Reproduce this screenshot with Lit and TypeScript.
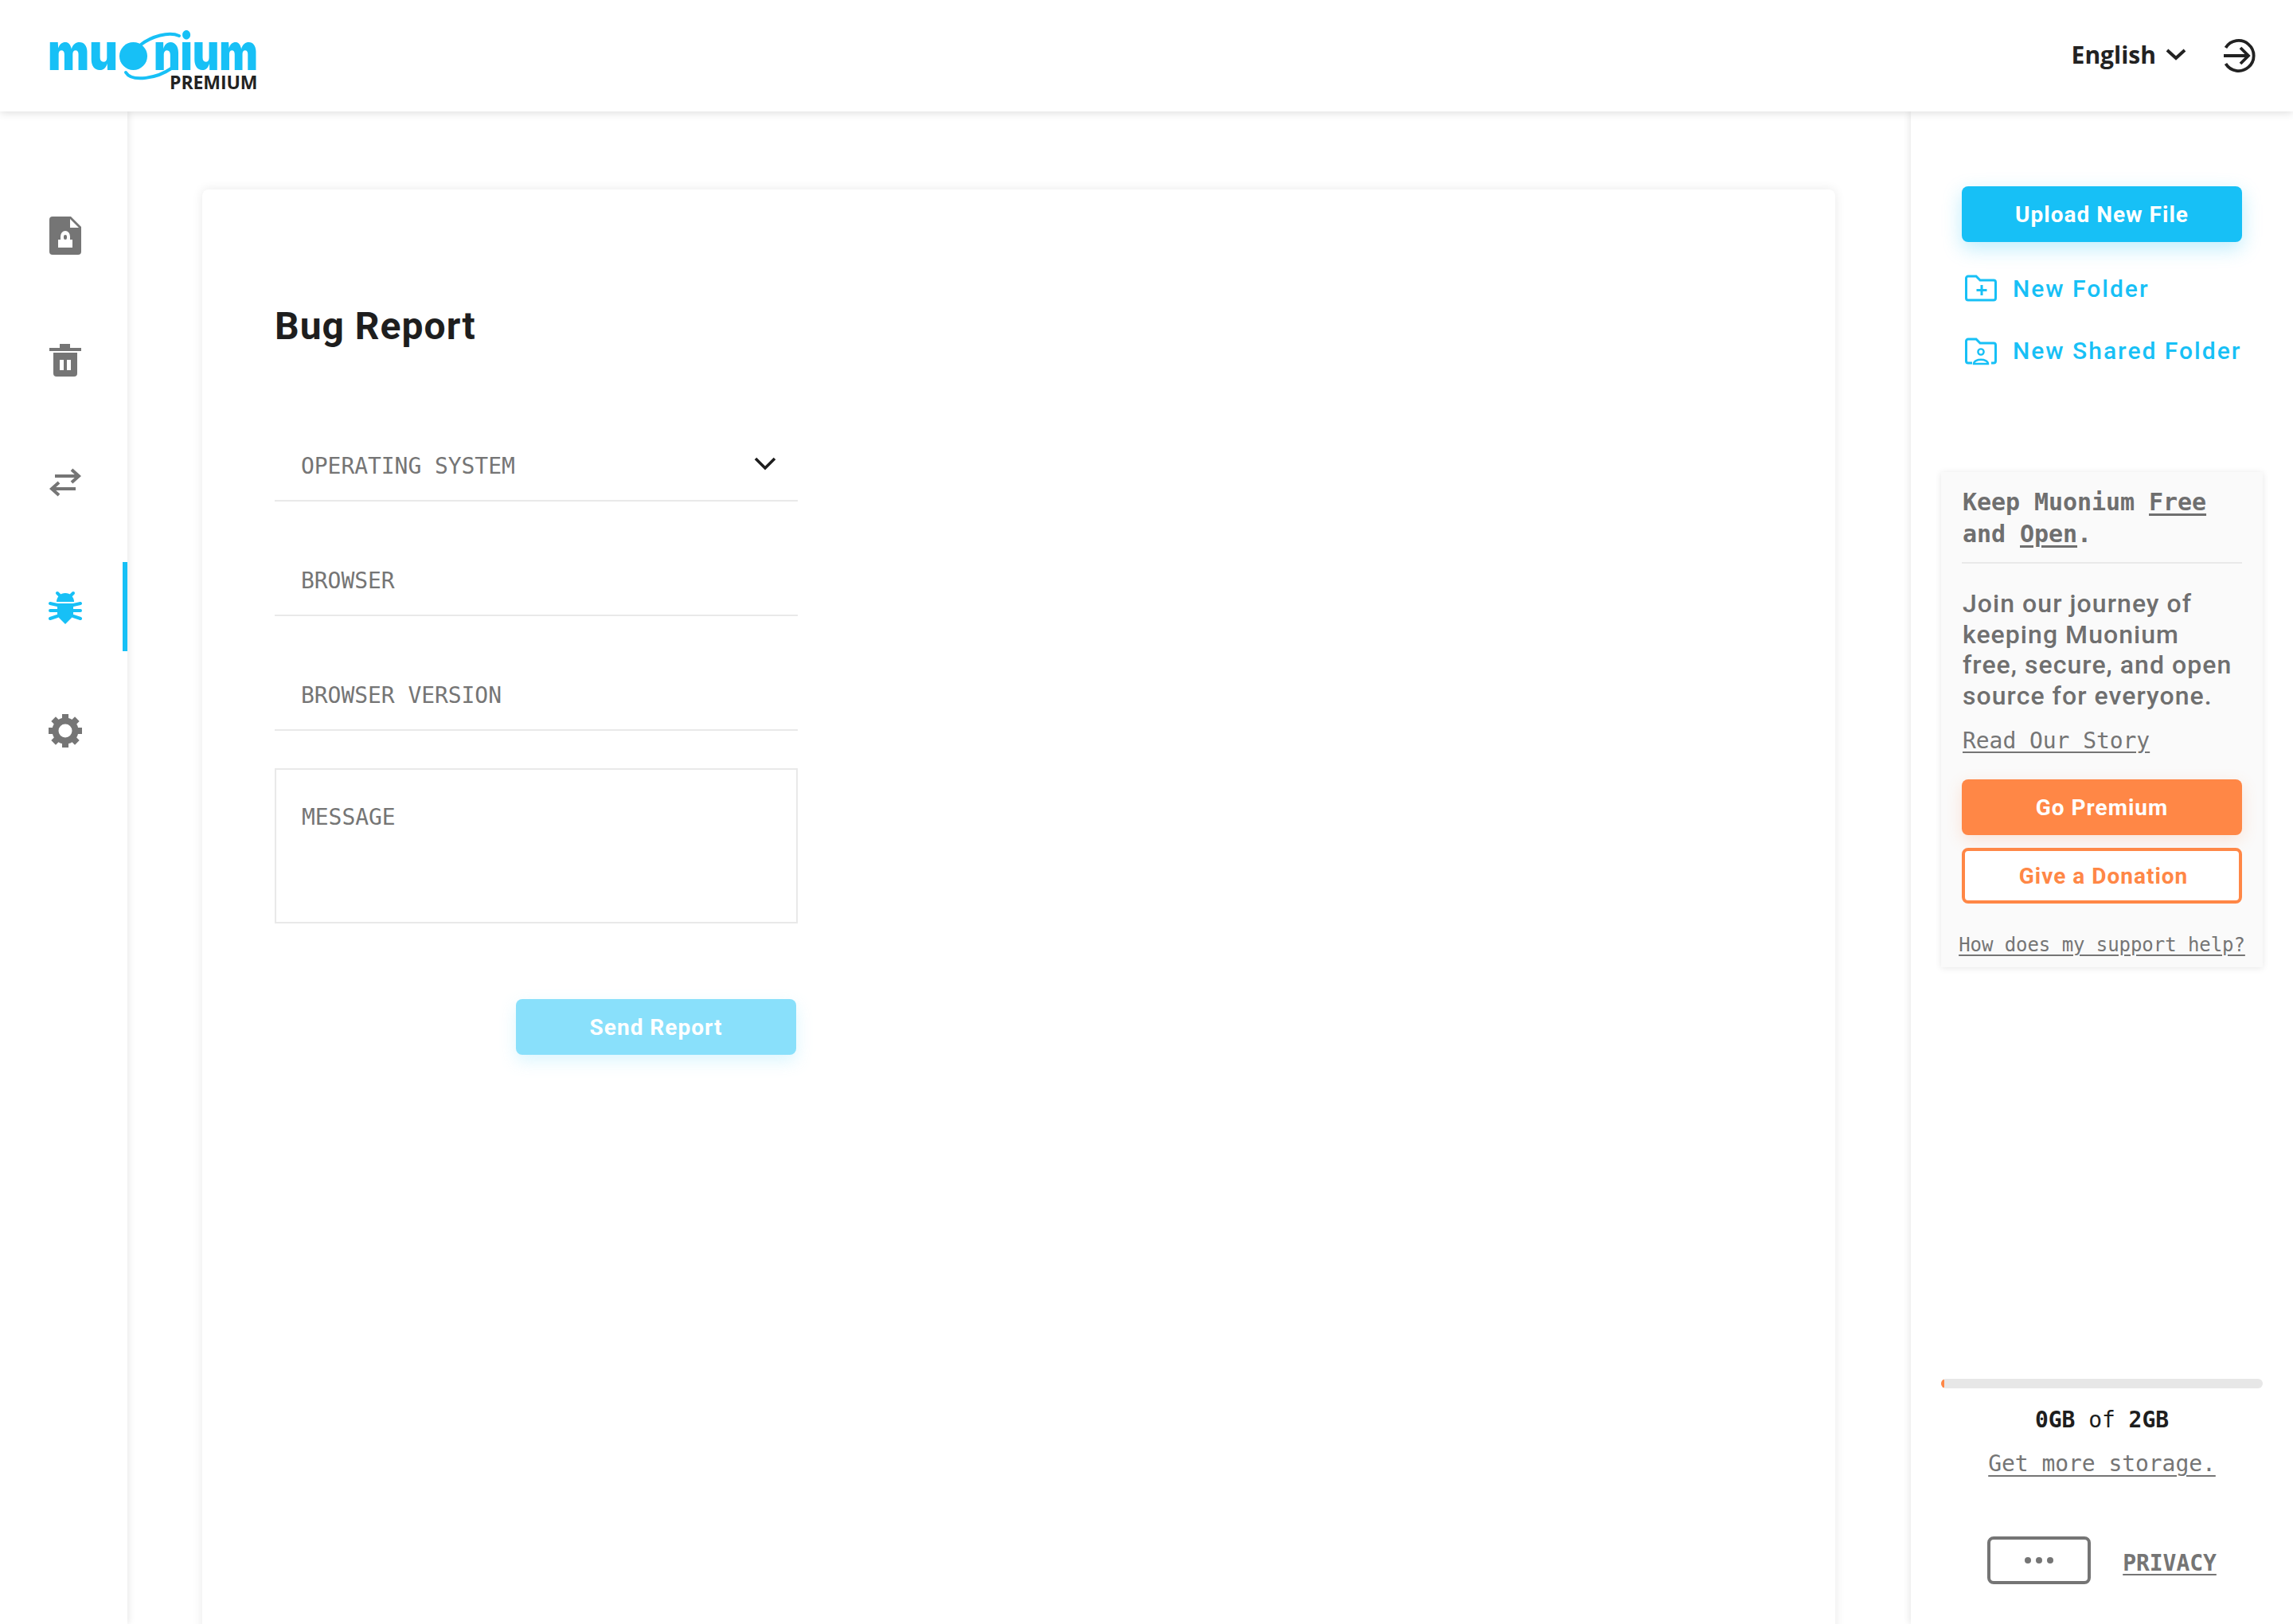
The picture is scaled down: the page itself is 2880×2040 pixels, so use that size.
import { LitElement, html, css, svg } from "lit";
import { customElement } from "lit/decorators.js";

const gearTeeth = [0, 45, 90, 135, 180, 225, 270, 315];

@customElement("app-root")
export class AppRoot extends LitElement {
  static styles = css`
    :host { display: block; width: 2880px; height: 2040px; overflow: hidden; background: #fff; color: #757575; font-family: "DejaVu Sans Mono", monospace; letter-spacing: -.06px; }
    * { box-sizing: border-box; }
    svg { display: block; flex: none; overflow: visible; }
    .header { height: 140px; background: #fff; display: flex; align-items: center; padding: 0 46px 0 48px; box-shadow: 0 2px 10px rgba(0,0,0,.13); position: relative; z-index: 3; }
    .logo-word { font-family: Inter, sans-serif; font-weight: 900; font-size: 64px; fill: #17c0f6; }
    .logo-sub { font-family: "Open Sans", sans-serif; font-weight: 700; font-size: 23px; fill: #222; }
    .spacer { flex: 1; }
    .lang { font-family: "Open Sans", sans-serif; font-weight: 700; font-size: 30px; letter-spacing: 0; color: #222; display: flex; align-items: center; gap: 12px; margin-right: 46px; margin-top: -4px; margin-left: -2px; }
    .body { display: flex; height: 1900px; }
    .nav { width: 160px; flex: none; box-shadow: 2px 0 8px rgba(0,0,0,.09); position: relative; z-index: 2; background: #fff; display: flex; flex-direction: column; align-items: center; padding: 132px 0 0 4px; }
    .nav-item { display: flex; justify-content: center; align-items: center; width: 100%; height: 48px; }
    .nav-item.trash { margin-top: 108px; }
    .nav-item.swap { margin-top: 106px; }
    .nav-item.bug { margin-top: 109px; }
    .nav-item.gear { margin-top: 107px; }
    .active-bar { position: absolute; right: 0; top: 566px; width: 6px; height: 112px; background: #17c0f6; }
    .main { flex: 1; min-width: 0; padding: 98px 95px 0 94px; }
    .card { height: 2000px; background: #fff; border-radius: 8px; box-shadow: 0 0 14px rgba(0,0,0,.09); padding: 140px 0 0 91px; }
    h1 { margin: 0; font: 700 48px/64px Roboto, sans-serif; color: #1e1e1e; letter-spacing: 1px; }
    .form { width: 657px; margin-top: 108px; }
    .field { height: 80px; border-bottom: 2px solid #e9e9e9; font-size: 28px; line-height: 32px; padding: 20px 0 0 33px; display: flex; justify-content: space-between; margin-bottom: 64px; }
    .field svg { margin: 4px 27px 0 0; }
    .msg { height: 195px; border: 2px solid #e9e9e9; font-size: 28px; line-height: 32px; padding: 44px 0 0 32px; margin-top: -17px; }
    .send-row { display: flex; justify-content: flex-end; margin-top: 95px; }
    .btn { height: 70px; border-radius: 8px; display: flex; align-items: center; justify-content: center; font: 700 28px/32px Roboto, sans-serif; letter-spacing: 1px; color: #fff; padding-top: 2px; }
    .send { width: 352px; margin-right: 2px; background: #89e0fb; box-shadow: 0 8px 20px rgba(137,224,251,.3); }
    .side { width: 480px; flex: none; box-shadow: -2px 0 8px rgba(0,0,0,.09); position: relative; z-index: 2; background: #fff; padding: 94px 38px 0 38px; display: flex; flex-direction: column; }
    .upload { width: 352px; margin-left: 26px; background: #17c0f6; box-shadow: 0 8px 24px rgba(23,192,246,.28); }
    .link { display: flex; align-items: center; height: 34px; margin: 41px 0 0 30px; gap: 20px; color: #17c0f6; font: 500 30px/34px Roboto, sans-serif; letter-spacing: 2px; white-space: nowrap; }
    .link + .link { margin-top: 45px; }
    .link span { margin-top: 2px; }
    .link + .link span { margin-top: 0; }
    .promo { margin-top: 135px; width: 404px; height: 622px; background: #fafafa; box-shadow: 0 1px 8px rgba(0,0,0,.1); padding: 18px 26px 0 26px; }
    .promo-title { font-weight: 700; font-size: 30px; line-height: 40px; padding: 0 0 15px 1px; border-bottom: 2px solid #e9e9e9; color: #6f6f6f; }
    .promo-title u { text-underline-offset: 4px; }
    .promo-text { font: 500 32px/38.5px Roboto, sans-serif; letter-spacing: 1.05px; margin: 31px 0 0 1px; color: #6f6f6f; width: 345px; }
    .story { font-size: 28px; line-height: 40px; margin: 18px 0 0 1px; text-decoration: underline; text-underline-offset: 4px; }
    .premium { margin-top: 28px; background: #ff8746; box-shadow: 0 6px 20px rgba(255,135,70,.2); }
    .donate { margin-top: 16px; background: #fff; border: 4px solid #ff8746; color: #ff8746; padding-left: 4px; }
    .help { font-size: 24px; line-height: 32px; margin: 36px -6px 0; text-align: center; text-decoration: underline; text-underline-offset: 4px; white-space: nowrap; }
    .storage { margin-top: 517px; width: 404px; display: flex; flex-direction: column; align-items: center; }
    .bar { align-self: stretch; height: 12px; border-radius: 6px; background: #e7e7e7; overflow: hidden; }
    .bar i { display: block; height: 100%; width: 4px; background: #ff8746; border-radius: 2px; }
    .usage { font-size: 28px; line-height: 40px; margin-top: 20px; color: #1e1e1e; white-space: pre; }
    .more { font-size: 28px; line-height: 40px; margin-top: 15px; text-decoration: underline; text-underline-offset: 5px; }
    .foot { display: flex; align-items: center; gap: 40px; margin-top: 71px; }
    .dots { width: 130px; height: 60px; border: 4px solid #757575; border-radius: 8px; display: flex; align-items: center; justify-content: center; gap: 6px; }
    .dots i { width: 8px; height: 8px; border-radius: 50%; background: #757575; }
    .privacy { font-weight: 700; font-size: 28px; text-decoration: underline; text-underline-offset: 4px; margin-top: 6px; }
  `;

  render() {
    return html`
      <div class="header">
        <svg width="300" height="100" viewBox="48 20 300 100">
          <text class="logo-word" x="60" y="88" textLength="88" lengthAdjust="spacingAndGlyphs">mu</text>
          <text class="logo-word" x="193" y="88" textLength="131" lengthAdjust="spacingAndGlyphs">nium</text>
          <circle cx="167.5" cy="70.5" r="17.5" fill="#17c0f6"/>
          <path d="M177 56 C190 46 212 39 225 45" fill="none" stroke="#17c0f6" stroke-width="4" stroke-linecap="round"/>
          <path d="M158 91 C166 104 198 98 215 86" fill="none" stroke="#17c0f6" stroke-width="4" stroke-linecap="round"/>
          <text class="logo-sub" x="213" y="112">PREMIUM</text>
        </svg>
        <div class="spacer"></div>
        <div class="lang">English
          <svg width="26" height="14" viewBox="0 0 26 14"><path d="M2 2 L13 12 L24 2" fill="none" stroke="#222" stroke-width="4"/></svg>
        </div>
        <svg width="42" height="42" viewBox="0 0 42 42">
          <path d="M3.5 11 A19 19 0 1 1 3.5 31" fill="none" stroke="#222" stroke-width="3.8"/>
          <path d="M1 21 H32 M22 11 L32 21 L22 31" fill="none" stroke="#222" stroke-width="3.8"/>
        </svg>
      </div>
      <div class="body">
        <div class="nav">
          <div class="nav-item">
            <svg width="40" height="48" viewBox="0 0 40 48">
              <path d="M4 0 H27 L40 13 V44 a4 4 0 0 1 -4 4 H4 a4 4 0 0 1 -4 -4 V4 a4 4 0 0 1 4 -4Z" fill="#757575"/>
              <path d="M26 3 L37 14 H26Z" fill="#fff"/>
              <path d="M11 29 H14 V25 a6 7 0 0 1 12 0 V29 H29 V39 H11Z" fill="#fff"/>
              <rect x="18" y="23" width="4" height="6" rx="2" fill="#757575"/>
            </svg>
          </div>
          <div class="nav-item trash">
            <svg width="40" height="41" viewBox="0 0 40 41">
              <path d="M13 0 H26 V5 H40 V9 H0 V5 H13Z" fill="#757575"/>
              <path d="M5 11 H35 V37 a4 4 0 0 1 -4 4 H9 a4 4 0 0 1 -4 -4Z" fill="#757575"/>
              <rect x="13" y="20" width="5" height="13" fill="#fff"/><rect x="22" y="20" width="5" height="13" fill="#fff"/>
            </svg>
          </div>
          <div class="nav-item swap">
            <svg width="40" height="36" viewBox="0 0 40 36">
              <path d="M7 10 H36 M28 2 L37 10 L28 18 M33 26 H4 M12 18 L3 26 L12 34" fill="none" stroke="#757575" stroke-width="4"/>
            </svg>
          </div>
          <div class="nav-item bug">
            <svg width="40" height="46" viewBox="0 0 40 46">
              <path d="M9 16 a11 11 0 0 1 22 0Z" fill="#17c0f6"/>
              <path d="M10 5 L14 9 M30 5 L26 9" stroke="#17c0f6" stroke-width="4" stroke-linecap="round"/>
              <path d="M10 18 H30 V34 L20 44 L10 34Z" fill="#17c0f6"/>
              <path d="M1 18 L10 20 M1 27 H10 M1 37 L10 34 M39 18 L30 20 M39 27 H30 M39 37 L30 34" stroke="#17c0f6" stroke-width="4" stroke-linecap="round"/>
            </svg>
          </div>
          <div class="nav-item gear">
            <svg width="42" height="42" viewBox="0 0 42 42">
              <circle cx="21" cy="21" r="12.5" fill="none" stroke="#757575" stroke-width="8"/>
              ${gearTeeth.map((a) => svg`<rect x="17" y="0" width="8" height="8" fill="#757575" transform="rotate(${a} 21 21)"/>`)}
            </svg>
          </div>
          <div class="active-bar"></div>
        </div>
        <div class="main">
          <div class="card">
            <h1>Bug Report</h1>
            <div class="form">
              <div class="field">OPERATING SYSTEM
                <svg width="28" height="16" viewBox="0 0 28 16"><path d="M2 2 L14 14 L26 2" fill="none" stroke="#1e1e1e" stroke-width="3.6"/></svg>
              </div>
              <div class="field">BROWSER</div>
              <div class="field">BROWSER VERSION</div>
              <div class="msg">MESSAGE</div>
              <div class="send-row"><div class="btn send">Send Report</div></div>
            </div>
          </div>
        </div>
        <div class="side">
          <div class="btn upload">Upload New File</div>
          <div class="link">
            <svg width="40" height="34" viewBox="0 0 40 34">
              <path d="M4 2 H14 L19 7 H36 a2.5 2.5 0 0 1 2.5 2.5 V29.5 a2.5 2.5 0 0 1 -2.5 2.5 H4 a2.5 2.5 0 0 1 -2.5 -2.5 V4.5 A2.5 2.5 0 0 1 4 2Z" fill="none" stroke="#17c0f6" stroke-width="3"/>
              <path d="M21 13 V26 M14.5 19.5 H27.5" stroke="#17c0f6" stroke-width="3"/>
            </svg>
            <span>New Folder</span>
          </div>
          <div class="link">
            <svg width="40" height="34" viewBox="0 0 40 34">
              <path d="M9 32 H4 a2.5 2.5 0 0 1 -2.5 -2.5 V4.5 A2.5 2.5 0 0 1 4 2 H14 L19 7 H36 a2.5 2.5 0 0 1 2.5 2.5 V29.5 a2.5 2.5 0 0 1 -2.5 2.5 H33" fill="none" stroke="#17c0f6" stroke-width="3"/>
              <circle cx="20" cy="18" r="3.6" fill="none" stroke="#17c0f6" stroke-width="2.4"/>
              <path d="M11 33 C11 26 29 26 29 33Z" fill="none" stroke="#17c0f6" stroke-width="2.4"/>
            </svg>
            <span>New Shared Folder</span>
          </div>
          <div class="promo">
            <div class="promo-title">Keep Muonium <u>Free</u> and <u>Open</u>.</div>
            <div class="promo-text">Join our journey of keeping Muonium free, secure, and open source for everyone.</div>
            <div class="story">Read Our Story</div>
            <div class="btn premium">Go Premium</div>
            <div class="btn donate">Give a Donation</div>
            <div class="help">How does my support help?</div>
          </div>
          <div class="storage">
            <div class="bar"><i></i></div>
            <div class="usage"><b>0GB</b> of <b>2GB</b></div>
            <div class="more">Get more storage.</div>
            <div class="foot">
              <div class="dots"><i></i><i></i><i></i></div>
              <div class="privacy">PRIVACY</div>
            </div>
          </div>
        </div>
      </div>
    `;
  }
}
